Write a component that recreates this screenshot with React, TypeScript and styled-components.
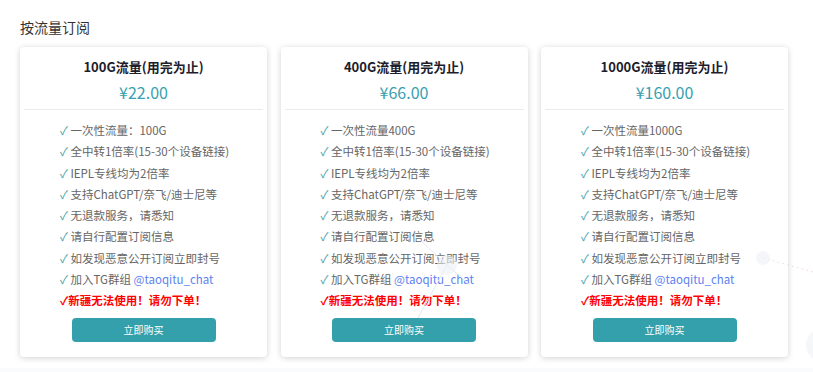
import React from "react";
import styled, { createGlobalStyle } from "styled-components";

type Plan = {
  title: string;
  price: string;
  first: string;
};

const PLANS: Plan[] = [
  { title: "100G流量(用完为止)", price: "¥22.00", first: "一次性流量：100G" },
  { title: "400G流量(用完为止)", price: "¥66.00", first: "一次性流量400G" },
  { title: "1000G流量(用完为止)", price: "¥160.00", first: "一次性流量1000G" },
];

const COMMON = [
  "全中转1倍率(15-30个设备链接)",
  "IEPL专线均为2倍率",
  "支持ChatGPT/奈飞/迪士尼等",
  "无退款服务，请悉知",
  "请自行配置订阅信息",
  "如发现恶意公开订阅立即封号",
];

// 背景粒子（particles 效果的静态版）
function Particles() {
  return (
    <Overlay width="813" height="372" viewBox="0 0 813 372">
      <g stroke="#e4e8f0" strokeWidth="1" fill="none">
        <line x1="447" y1="265" x2="420" y2="240" />
        <line x1="447" y1="265" x2="470" y2="285" />
        <line x1="447" y1="265" x2="418" y2="318" />
        <line x1="763" y1="258" x2="813" y2="272" strokeDasharray="2 3" stroke="#f0dfe6" />
      </g>
      <g fill="#edf0f5" fillOpacity="0.6">
        <circle cx="447" cy="265" r="10" />
        <circle cx="763" cy="258" r="7" />
        <circle cx="822" cy="345" r="16" />
      </g>
    </Overlay>
  );
}

export default function App() {
  return (
    <Page>
      <Global />
      <Heading>按流量订阅</Heading>
      <Cards>
        {PLANS.map((p) => (
          <Card key={p.title}>
            <Title>{p.title}</Title>
            <Price>{p.price}</Price>
            <Divider />
            <Features>
              {[p.first, ...COMMON].map((f) => (
                <Feature key={f}>
                  <Check>✓</Check> {f}
                </Feature>
              ))}
              <Feature>
                <Check>✓</Check> 加入TG群组 <Link>@taoqitu_chat</Link>
              </Feature>
              <Warn>✓新疆无法使用！请勿下单！</Warn>
            </Features>
            <Buy>立即购买</Buy>
          </Card>
        ))}
      </Cards>
      <Particles />
    </Page>
  );
}

const Global = createGlobalStyle`
  html, body { margin: 0; background: #fafbfc; }
  body { font-family: "Noto Sans CJK SC", "Noto Sans", sans-serif; }
`;

const Page = styled.div`position:relative;width:813px;height:368px;background:#fff;box-sizing:border-box;padding:17px 20px 0;overflow:hidden;`;
const Overlay = styled.svg`position:absolute;left:0;top:0;pointer-events:none;`;
const Heading = styled.div`font-size:14px;color:#333;line-height:20px;`;
const Cards = styled.div`display:grid;grid-template-columns:repeat(3,247px);column-gap:13.5px;margin-top:10px;`;
const Card = styled.div`background:#fff;border-radius:4px;box-shadow:0 1px 6px rgba(0,0,0,0.18);padding:9px 4px 15px;display:flex;flex-direction:column;`;
const Title = styled.div`text-align:center;font-weight:700;font-size:13px;color:#1d1d2b;line-height:22px;`;
const Price = styled.div`text-align:center;font-size:16px;color:#38a0b0;line-height:24px;margin-top:2px;`;
const Divider = styled.div`height:1px;background:#ebebeb;margin-top:5px;`;
const Features = styled.div`padding:10px 0 0 36px;display:flex;flex-direction:column;`;
const Feature = styled.div`font-size:11.5px;color:#666;line-height:21.3px;white-space:nowrap;`;
const Check = styled.span`color:#48a1a8;`;
const Link = styled.span`color:#5b7ff0;`;
const Warn = styled.div`font-size:11.5px;color:#f00;font-weight:700;line-height:21.3px;white-space:nowrap;`;
const Buy = styled.div`align-self:center;width:144px;height:24px;margin-top:6px;background:#33a0ab;border-radius:4px;color:#fff;font-size:10px;display:flex;align-items:center;justify-content:center;`;
